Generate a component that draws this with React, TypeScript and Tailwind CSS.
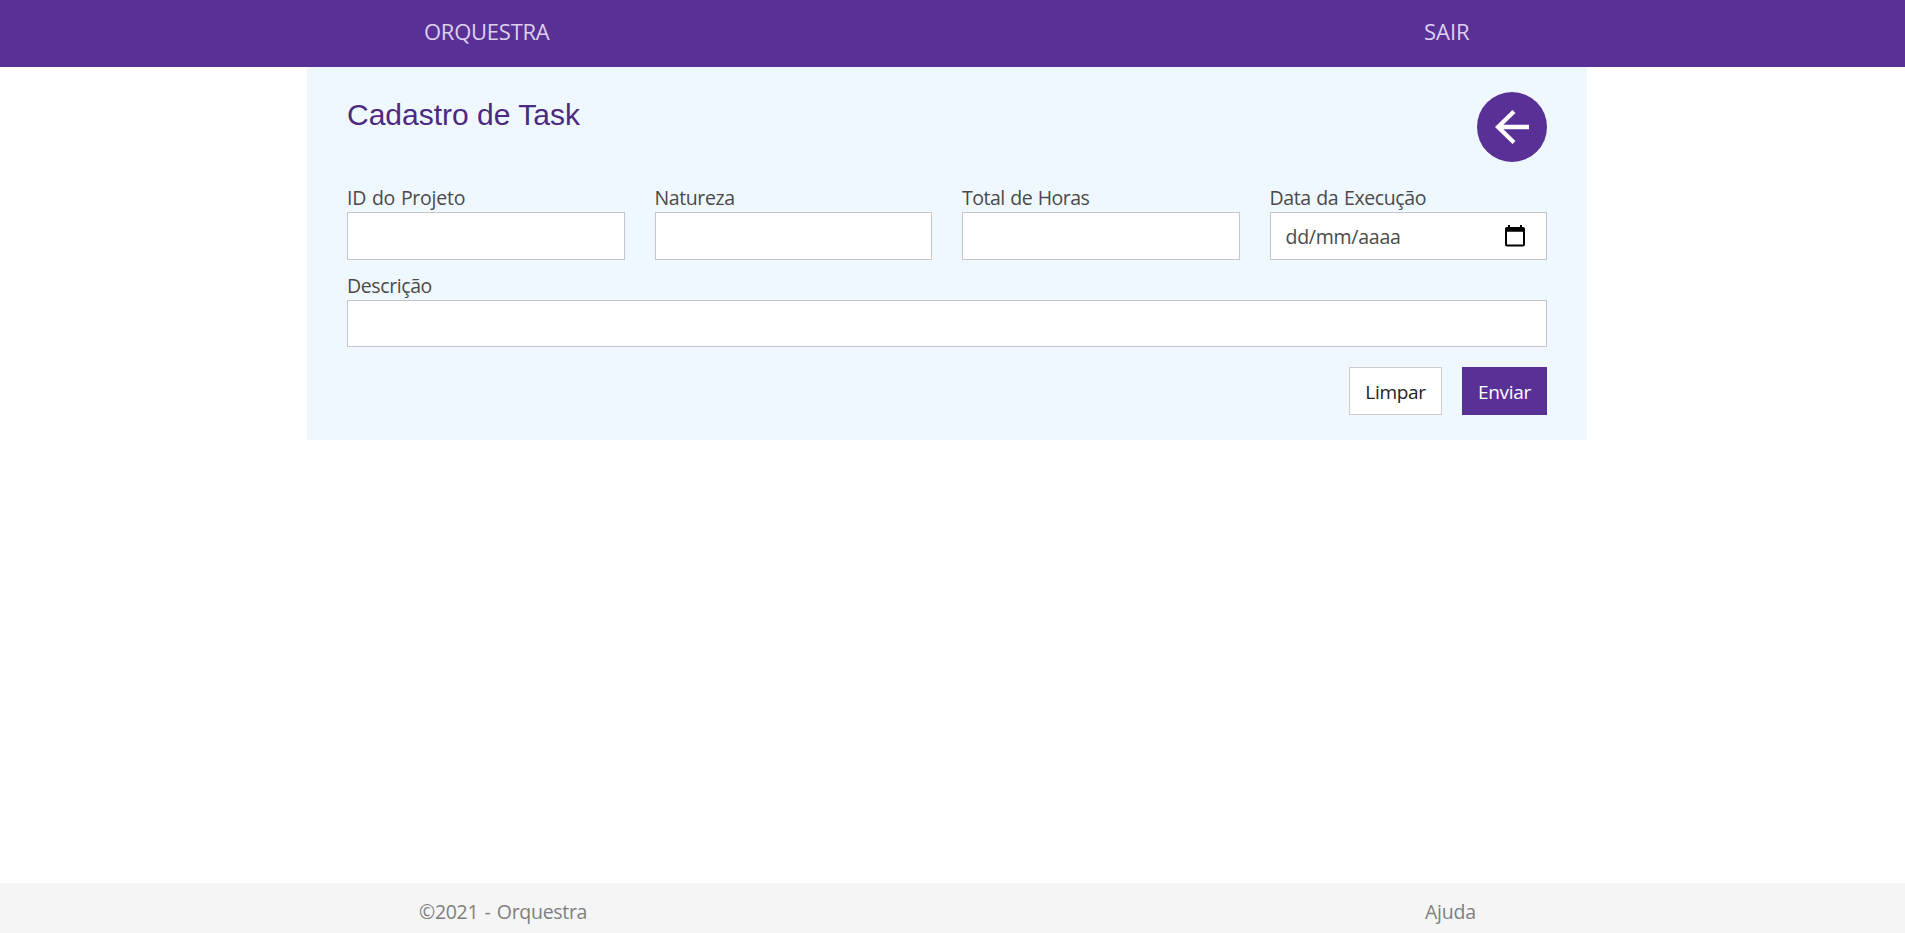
import type { ReactNode } from "react";

type FieldProps = {
  label: string;
  labelClass?: string;
  boxClass?: string;
  children?: ReactNode;
};

function Field({ label, labelClass = "tracking-[-0.4px]", boxClass = "h-12", children }: FieldProps) {
  return (
    <label className="flex flex-col">
      <span className="flex h-[27px] items-center whitespace-nowrap pb-[2px] text-[19.5px] leading-[27px] text-[#4a4a4a] [word-spacing:1px]">
        <span className={labelClass}>{label}</span>
      </span>
      <span className={`flex items-center justify-between border border-[#c8c4ce] bg-white pl-[15px] pr-[21px] text-[19.5px] ${boxClass}`}>
        {children}
      </span>
    </label>
  );
}

function CalendarIcon() {
  return (
    <svg width="20" height="22" viewBox="0 0 20 22" className="fill-black">
      <path
        fillRule="evenodd"
        d="M18 2h-1V0h-2v2H5V0H3v2H2C.9 2 0 2.900 0 4v15.500c0 1.100.9 2 2 2h16c1.100 0 2-.9 2-2V4c0-1.100-.9-2-2-2zm0 17.500H2V6.800h16v12.700z"
      />
    </svg>
  );
}

export default function App() {
  return (
    <div className="flex min-h-screen flex-col bg-white font-['Open_Sans','Noto_Sans',sans-serif]">
      <header className="flex h-[67px] bg-[#593196] pl-[424px] pt-[15px] text-[22px] leading-[32px] text-[#decfee]">
        <a className="w-[1000px]"><span className="tracking-[-0.25px]">ORQUESTRA</span></a>
        <a><span>SAIR</span></a>
      </header>

      <main className="ml-[307px] h-[373px] w-[1280px] bg-[#f0f8ff] px-10 pt-[25px]">
        <div className="flex h-[93px] items-start justify-between">
          <h1 className="pt-[6px] font-['Liberation_Sans',Arial,sans-serif] text-[30px] leading-[34px] text-[#4b2a80]">
            Cadastro de Task
          </h1>
          <button className="flex size-[70px] items-center justify-center rounded-full bg-[#593196]" aria-label="Voltar">
            <svg width="34" height="34" viewBox="0 0 34 34" fill="none" stroke="white" strokeWidth="4.3">
              <path d="M34 17H4M19 1.500L3 17L19 32.500" />
            </svg>
          </button>
        </div>

        <div className="grid grid-cols-4 gap-x-[30px]">
          <Field label="ID do Projeto" labelClass="tracking-[-0.25px]" />
          <Field label="Natureza" />
          <Field label="Total de Horas" labelClass="tracking-[-0.5px]" />
          <Field label="Data da Execução">
            <span className="pt-[2px] tracking-[-0.25px] text-[#4a4a4a]">dd/mm/aaaa</span>
            <CalendarIcon />
          </Field>
        </div>
        <div className="mt-[13px]">
          <Field label="Descrição" boxClass="h-[47px]" />
        </div>

        <div className="mt-5 flex justify-end gap-5 text-[19px] tracking-[-0.3px]">
          <button className="h-12 w-[93px] border border-[#cccccc] bg-white pt-[2px] text-[#222222]">Limpar</button>
          <button className="h-12 w-[85px] bg-[#593196] pt-[2px] text-white">Enviar</button>
        </div>
      </main>

      <footer className="mt-auto flex h-[50px] bg-[#f5f5f5] pl-[419px] pt-[14px] text-[19.5px] leading-[30px] text-[#808080]">
        <span className="w-[1006px]"><span className="tracking-[-0.3px] [word-spacing:1.5px]">©2021 - Orquestra</span></span>
        <a><span className="tracking-[-0.25px]">Ajuda</span></a>
      </footer>
    </div>
  );
}
